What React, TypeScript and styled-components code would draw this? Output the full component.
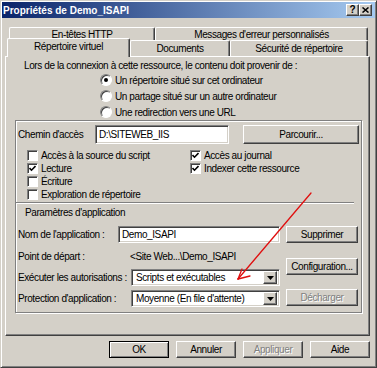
import styled, { createGlobalStyle } from "styled-components";

const GlobalStyle = createGlobalStyle`
  html, body {
    margin: 0;
    padding: 0;
    background: #d4d0c8;
  }
  body {
    font-family: "Liberation Sans", Arial, sans-serif;
    font-size: 10px;
    letter-spacing: -0.4px;
    color: #000;
  }
  * {
    box-sizing: border-box;
  }
`;

const raised = `
  border: 1px solid;
  border-color: #fff #404040 #404040 #fff;
  box-shadow: inset -1px -1px 0 #808080;
`;

const sunken = `
  border: 1px solid;
  border-color: #808080 #fff #fff #808080;
  box-shadow: inset 1px 1px 0 #404040, inset -1px -1px 0 #d4d0c8;
`;

const Window = styled.div`
  position: relative;
  width: 377px;
  height: 368px;
  background: #d4d0c8;
  border: 1px solid;
  border-color: #d4d0c8 #404040 #404040 #d4d0c8;
  box-shadow: inset 1px 1px 0 #fff, inset -1px -1px 0 #808080;
  padding: 1px;
  display: flex;
  flex-direction: column;
`;

const TitleBar = styled.div`
  height: 16px;
  display: flex;
  align-items: center;
  justify-content: space-between;
  padding: 0 3px 0 1px;
  background: linear-gradient(to right, #0a246a, #a6caf0);
`;

const Title = styled.span`
  color: #fff;
  font-weight: bold;
  font-size: 10px;
  letter-spacing: 0;
`;

const TitleButtons = styled.div`
  display: flex;
`;

const TitleButton = styled.div`
  width: 13px;
  height: 12px;
  background: #d4d0c8;
  ${raised}
  display: flex;
  align-items: center;
  justify-content: center;
  font-weight: bold;
  font-size: 10px;
  line-height: 10px;
  letter-spacing: 0;
`;

const Body = styled.div`
  display: flex;
  flex-direction: column;
  padding: 0 5px 0 3px;
`;

const TabRow = styled.div<{ $top: number; $left: number; $h: number }>`
  display: flex;
  align-items: flex-start;
  height: ${(p) => p.$h}px;
  margin-top: ${(p) => p.$top}px;
  padding-left: ${(p) => p.$left}px;
`;

const Tab = styled.div<{ $w: number; $h: number; $active?: boolean }>`
  width: ${(p) => p.$w}px;
  height: ${(p) => (p.$active ? p.$h + 3 : p.$h)}px;
  margin-top: ${(p) => (p.$active ? -2 : 0)}px;
  position: relative;
  z-index: ${(p) => (p.$active ? 2 : 0)};
  background: #d4d0c8;
  border-top: 1px solid #fff;
  border-left: 1px solid #fff;
  border-right: 1px solid #404040;
  box-shadow: inset -1px 0 0 #808080;
  border-radius: 2px 2px 0 0;
  display: flex;
  align-items: center;
  justify-content: center;
  padding-bottom: ${(p) => (p.$active ? 3 : 0)}px;
  white-space: nowrap;
`;

const Panel = styled.div`
  height: 280px;
  border: 1px solid;
  border-color: #fff #404040 #404040 #fff;
  box-shadow: inset -1px -1px 0 #808080;
  padding: 2px 1px 0 0;
  display: flex;
  flex-direction: column;
`;

const Intro = styled.div`
  line-height: 13px;
  padding-left: 18px;
  white-space: nowrap;
`;

const RadioList = styled.div`
  display: flex;
  flex-direction: column;
  margin-left: 94px;
`;

const Option = styled.label`
  display: flex;
  align-items: center;
  gap: 3px;
  height: 16px;
  white-space: nowrap;
`;

const RadioDot = styled.span<{ $on?: boolean }>`
  width: 12px;
  height: 12px;
  border-radius: 50%;
  border: 1px solid;
  border-color: #808080 #fff #fff #808080;
  box-shadow: inset 1px 1px 0 #404040;
  background: #fff;
  display: flex;
  align-items: center;
  justify-content: center;

  &::after {
    content: "";
    width: 4px;
    height: 4px;
    border-radius: 50%;
    background: ${(p) => (p.$on ? "#000" : "transparent")};
  }
`;

const Frame = styled.div`
  margin: 0 6px 0 9px;
  border: 1px solid #808080;
  box-shadow: inset 1px 1px 0 #fff, 1px 1px 0 #fff;
  padding: 3px 0 5px 0;
  display: flex;
  flex-direction: column;
`;

const Row = styled.div`
  display: flex;
  align-items: center;
  padding-left: 2px;
  white-space: nowrap;
`;

const Label = styled.span<{ $w: number }>`
  width: ${(p) => p.$w}px;
  flex: none;
`;

const TextBox = styled.div<{ $w: number; $h: number }>`
  width: ${(p) => p.$w}px;
  height: ${(p) => p.$h}px;
  background: #fff;
  ${sunken}
  display: flex;
  align-items: center;
  padding-left: 3px;
`;

const Button = styled.div<{ $w: number; $h?: number; $disabled?: boolean; $default?: boolean }>`
  width: ${(p) => p.$w}px;
  height: ${(p) => p.$h ?? 17}px;
  flex: none;
  background: #d4d0c8;
  border: 1px solid;
  border-color: ${(p) => (p.$default ? "#000" : "#fff #404040 #404040 #fff")};
  box-shadow: ${(p) =>
    p.$default
      ? "inset 1px 1px 0 #fff, inset -1px -1px 0 #808080"
      : "inset -1px -1px 0 #808080"};
  display: flex;
  align-items: center;
  justify-content: center;
  color: ${(p) => (p.$disabled ? "#808080" : "#000")};
  text-shadow: ${(p) => (p.$disabled ? "1px 1px 0 #fff" : "none")};
  white-space: nowrap;
`;

const CheckGrid = styled.div`
  display: grid;
  grid-template-columns: 163px 1fr;
  grid-template-rows: repeat(4, 13px);
  grid-auto-flow: column;
  margin-top: 5px;
  padding-left: 11px;
`;

const CheckItem = styled.label`
  display: flex;
  align-items: center;
  gap: 3px;
  white-space: nowrap;
`;

const Box = styled.span`
  width: 11px;
  height: 11px;
  background: #fff;
  border: 1px solid;
  border-color: #808080 #fff #fff #808080;
  box-shadow: inset 1px 1px 0 #404040;
  display: flex;
  align-items: center;
  justify-content: center;
`;

const Divider = styled.div`
  height: 2px;
  margin: 1px 7px 0 0;
  border-top: 1px solid #808080;
  border-bottom: 1px solid #fff;
`;

const SectionTitle = styled.div`
  margin-top: 2px;
  padding-left: 9px;
  line-height: 13px;
`;

const AppArea = styled.div`
  display: flex;
  margin-top: 7px;
  padding-left: 2px;
`;

const LeftCol = styled.div`
  width: 262px;
  display: flex;
  flex-direction: column;
`;

const RightCol = styled.div`
  margin-left: 6px;
  display: flex;
  flex-direction: column;
`;

const Field = styled.div<{ $top?: number; $h: number }>`
  display: flex;
  align-items: center;
  height: ${(p) => p.$h}px;
  margin-top: ${(p) => p.$top ?? 0}px;
  white-space: nowrap;
`;

const Spaced = styled.div<{ $top: number; $left?: number }>`
  margin-top: ${(p) => p.$top}px;
  margin-left: ${(p) => p.$left ?? 0}px;
`;

const Select = styled.div<{ $w: number }>`
  width: ${(p) => p.$w}px;
  height: 17px;
  background: #fff;
  ${sunken}
  display: flex;
  align-items: center;
  padding: 2px 2px 2px 4px;
`;

const SelectText = styled.span`
  flex: 1;
  overflow: hidden;
`;

const DropButton = styled.div`
  width: 14px;
  height: 13px;
  background: #d4d0c8;
  ${raised}
  display: flex;
  align-items: center;
  justify-content: center;
`;

const Footer = styled.div`
  display: flex;
  justify-content: flex-end;
  gap: 7px;
  margin-top: 5px;
`;

const Overlay = styled.svg`
  position: absolute;
  left: -1px;
  top: -1px;
  pointer-events: none;
`;

const Check = ({ on }: { on?: boolean }) => (
  <Box>
    {on && (
      <svg width="7" height="7" viewBox="0 0 7 7">
        <polyline points="0.5,3 2.5,5.2 6.5,1" fill="none" stroke="#000" strokeWidth="1.6" />
      </svg>
    )}
  </Box>
);

const DropDown = ({ text, w }: { text: string; w: number }) => (
  <Select $w={w}>
    <SelectText>{text}</SelectText>
    <DropButton>
      <svg width="7" height="4" viewBox="0 0 7 4">
        <polygon points="0,0 7,0 3.5,4" fill="#000" />
      </svg>
    </DropButton>
  </Select>
);

const App = () => {
  return (
    <>
      <GlobalStyle />
      <Window>
        <TitleBar>
          <Title>Propriétés de Demo_ISAPI</Title>
          <TitleButtons>
            <TitleButton>?</TitleButton>
            <TitleButton>
              <svg width="7" height="6" viewBox="0 0 7 6">
                <path d="M0.5 0.5 L6.5 5.5 M6.5 0.5 L0.5 5.5" stroke="#000" strokeWidth="1.5" />
              </svg>
            </TitleButton>
          </TitleButtons>
        </TitleBar>
        <Body>
          <TabRow $top={9} $left={4} $h={13}>
            <Tab $w={146} $h={13}>En-têtes HTTP</Tab>
            <Tab $w={213} $h={13}>Messages d'erreur personnalisés</Tab>
          </TabRow>
          <TabRow $top={0} $left={2} $h={16}>
            <Tab $w={123} $h={16} $active>Répertoire virtuel</Tab>
            <Tab $w={100} $h={16}>Documents</Tab>
            <Tab $w={138} $h={16}>Sécurité de répertoire</Tab>
          </TabRow>
          <Panel>
            <Intro>Lors de la connexion à cette ressource, le contenu doit provenir de :</Intro>
            <RadioList>
              <Option>
                <RadioDot $on />
                Un répertoire situé sur cet ordinateur
              </Option>
              <Option>
                <RadioDot />
                Un partage situé sur un autre ordinateur
              </Option>
              <Option>
                <RadioDot />
                Une redirection vers une URL
              </Option>
            </RadioList>
            <Frame>
              <Row>
                <Label $w={77}>Chemin d'accès</Label>
                <TextBox $w={134} $h={19}>D:\SITEWEB_IIS</TextBox>
                <Spaced $top={1} $left={14}>
                  <Button $w={116} $h={19}>Parcourir...</Button>
                </Spaced>
              </Row>
              <CheckGrid>
                <CheckItem>
                  <Check />
                  Accès à la source du script
                </CheckItem>
                <CheckItem>
                  <Check on />
                  Lecture
                </CheckItem>
                <CheckItem>
                  <Check />
                  Écriture
                </CheckItem>
                <CheckItem>
                  <Check />
                  Exploration de répertoire
                </CheckItem>
                <CheckItem>
                  <Check on />
                  Accès au journal
                </CheckItem>
                <CheckItem>
                  <Check on />
                  Indexer cette ressource
                </CheckItem>
              </CheckGrid>
              <Divider />
              <SectionTitle>Paramètres d'application</SectionTitle>
              <AppArea>
                <LeftCol>
                  <Field $h={17}>
                    <Label $w={100}>Nom de l'application :</Label>
                    <TextBox $w={162} $h={17}>Demo_ISAPI</TextBox>
                  </Field>
                  <Field $top={5} $h={16}>
                    <Label $w={112}>Point de départ :</Label>
                    &lt;Site Web...\Demo_ISAPI
                  </Field>
                  <Field $top={5} $h={17}>
                    <Label $w={113}>Exécuter les autorisations :</Label>
                    <DropDown w={149} text="Scripts et exécutables" />
                  </Field>
                  <Field $top={4} $h={17}>
                    <Label $w={113}>Protection d'application :</Label>
                    <DropDown w={149} text="Moyenne (En file d'attente)" />
                  </Field>
                </LeftCol>
                <RightCol>
                  <Button $w={72}>Supprimer</Button>
                  <Spaced $top={15}>
                    <Button $w={72}>Configuration...</Button>
                  </Spaced>
                  <Spaced $top={14}>
                    <Button $w={72} $disabled>Décharger</Button>
                  </Spaced>
                </RightCol>
              </AppArea>
            </Frame>
          </Panel>
          <Footer>
            <Button $w={60} $default>OK</Button>
            <Button $w={60}>Annuler</Button>
            <Button $w={60} $disabled>Appliquer</Button>
            <Button $w={60}>Aide</Button>
          </Footer>
        </Body>
        <Overlay width="377" height="368" viewBox="0 0 377 368">
          <g stroke="#e01010" strokeWidth="1.3" fill="none" strokeLinecap="round">
            <line x1="311" y1="193" x2="238" y2="279" />
            <line x1="238" y1="279" x2="242" y2="269" />
            <line x1="238" y1="279" x2="250" y2="276" />
          </g>
        </Overlay>
      </Window>
    </>
  );
};

export default App;
